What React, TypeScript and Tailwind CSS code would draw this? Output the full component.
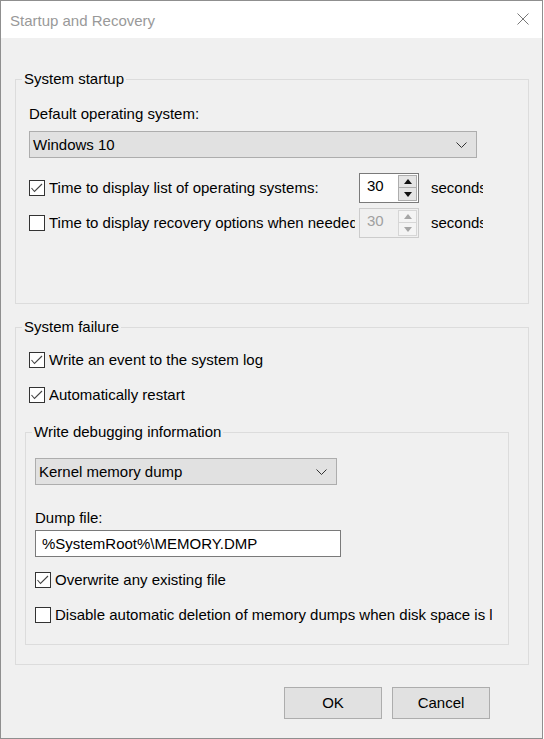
import React from "react";

const font = "font-['Liberation_Sans',Arial,sans-serif] text-[15px] leading-[20px] text-black";

function CheckBox({ checked }: { checked?: boolean }) {
  return (
    <span className="flex size-[16px] shrink-0 items-center justify-center border border-[#333333] bg-white">
      {checked && (
        <svg width="14" height="14" viewBox="0 0 14 14" fill="none">
          <polyline points="1.5,7 4.5,10.5 12,3" stroke="#444444" strokeWidth="1.1" />
        </svg>
      )}
    </span>
  );
}

function CheckRow({ checked, label, width }: { checked?: boolean; label: string; width?: string }) {
  return (
    <div className="flex h-[20px] items-center gap-[4px]">
      <CheckBox checked={checked} />
      <span className={`overflow-hidden whitespace-nowrap ${width ?? ""}`}>{label}</span>
    </div>
  );
}

function Chevron() {
  return (
    <svg width="11" height="6" viewBox="0 0 11 6" fill="none">
      <polyline points="0.5,0.5 5.5,5.5 10.5,0.5" stroke="#333333" strokeWidth="1" />
    </svg>
  );
}

function Spin({ disabled }: { disabled?: boolean }) {
  const arrow = disabled ? "#a6a6a6" : "#111111";
  return (
    <div
      className={`flex h-[30px] w-[60px] shrink-0 border ${
        disabled ? "border-[#cccccc] bg-[#f0f0f0]" : "border-[#7a7a7a] bg-white"
      }`}
    >
      <span className={`flex-1 pl-[7px] pt-[2px] ${disabled ? "text-[#a0a0a0]" : ""}`}>30</span>
      <div className="my-[1px] mr-[1px] flex w-[19px] flex-col">
        <div
          className={`flex h-[13px] items-center justify-center border ${
            disabled ? "border-[#d6d6d6] bg-[#f4f4f4]" : "border-[#adadad] bg-[#e5e5e5]"
          }`}
        >
          <svg width="8" height="5" viewBox="0 0 8 5">
            <polygon points="0,5 4,0 8,5" fill={arrow} />
          </svg>
        </div>
        <div
          className={`flex h-[13px] items-center justify-center border border-t-0 ${
            disabled ? "border-[#d6d6d6] bg-[#f4f4f4]" : "border-[#adadad] bg-[#e5e5e5]"
          }`}
        >
          <svg width="8" height="5" viewBox="0 0 8 5">
            <polygon points="0,0 8,0 4,5" fill={arrow} />
          </svg>
        </div>
      </div>
    </div>
  );
}

export default function App() {
  return (
    <div className={`h-[739px] w-[544px] bg-white ${font}`}>
      <div className="flex h-[739px] w-[543px] flex-col border border-[#8f8f8f] bg-[#f0f0f0]">
        {/* title bar */}
        <div className="flex h-[37px] shrink-0 items-start justify-between bg-white pl-[9px] pr-[13px] pt-[10px]">
          <span className="text-[#999999]">Startup and Recovery</span>
          <svg className="mt-[2px]" width="12" height="12" viewBox="0 0 12 12" fill="none">
            <path d="M0.5 0.5 L11.5 11.5 M11.5 0.5 L0.5 11.5" stroke="#777777" strokeWidth="1" />
          </svg>
        </div>

        {/* System startup */}
        <fieldset className="ml-[14px] mt-[31px] w-[514px] border border-[#dcdcdc] pb-[65px]">
          <legend className="ml-[6px] px-[2px]">System startup</legend>
          <div className="pl-[13px]">
            <div className="mt-[15px]">Default operating system:</div>
            <div className="mt-[7px] flex h-[27px] w-[448px] items-center justify-between border border-[#adadad] bg-[#e1e1e1] pl-[3px] pr-[9px] pt-[1px]">
              <span>Windows 10</span>
              <Chevron />
            </div>
            <div className="mt-[15px] flex h-[30px] items-center">
              <CheckBox checked />
              <span className="ml-[4px] w-[306px] overflow-hidden whitespace-nowrap">
                Time to display list of operating systems:
              </span>
              <span className="ml-[4px]">
                <Spin />
              </span>
              <span className="ml-[12px] w-[52px] overflow-hidden whitespace-nowrap">seconds</span>
            </div>
            <div className="mt-[5px] flex h-[30px] items-center">
              <CheckBox />
              <span className="ml-[4px] w-[306px] overflow-hidden whitespace-nowrap">
                Time to display recovery options when needed:
              </span>
              <span className="ml-[4px]">
                <Spin disabled />
              </span>
              <span className="ml-[12px] w-[52px] overflow-hidden whitespace-nowrap">seconds</span>
            </div>
          </div>
        </fieldset>

        {/* System failure */}
        <fieldset className="ml-[14px] mt-[13px] w-[514px] border border-[#dcdcdc] pb-[19px]">
          <legend className="ml-[6px] px-[2px]">System failure</legend>
          <div className="mt-[13px] pl-[13px]">
            <CheckRow checked label="Write an event to the system log" />
          </div>
          <div className="mt-[15px] pl-[13px]">
            <CheckRow checked label="Automatically restart" />
          </div>

          <fieldset className="ml-[9px] mt-[17px] w-[484px] border border-[#dcdcdc] pb-[19px]">
            <legend className="ml-[6px] px-[2px]">Write debugging information</legend>
            <div className="pl-[9px]">
              <div className="mt-[16px] flex h-[27px] w-[302px] items-center justify-between border border-[#adadad] bg-[#e1e1e1] pl-[3px] pr-[9px] pt-[1px]">
                <span>Kernel memory dump</span>
                <Chevron />
              </div>
              <div className="mt-[23px]">Dump file:</div>
              <div className="mt-[2px] flex h-[27px] w-[306px] items-center border border-[#7a7a7a] bg-white pl-[6px] pt-[1px]">
                %SystemRoot%\MEMORY.DMP
              </div>
              <div className="mt-[13px]">
                <CheckRow checked label="Overwrite any existing file" />
              </div>
              <div className="mt-[15px]">
                <CheckRow
                  label="Disable automatic deletion of memory dumps when disk space is low"
                  width="w-[437px]"
                />
              </div>
            </div>
          </fieldset>
        </fieldset>

        {/* buttons */}
        <div className="mr-[52px] mt-[22px] flex justify-end gap-[10px]">
          <button className="h-[32px] w-[98px] border border-[#adadad] bg-[#e1e1e1]">OK</button>
          <button className="h-[32px] w-[98px] border border-[#adadad] bg-[#e1e1e1]">Cancel</button>
        </div>
      </div>
    </div>
  );
}
